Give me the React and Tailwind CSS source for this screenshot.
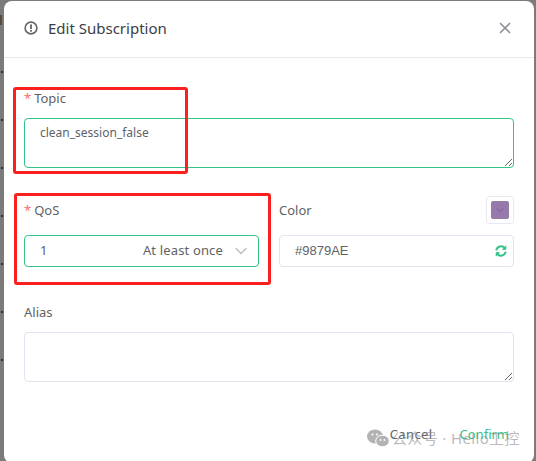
import React from "react";
import { X, ChevronDown } from "lucide-react";

const font = "font-['Noto_Sans','Open_Sans',sans-serif]";
const specks = [71, 119, 167, 215, 263, 311, 359];

function Label({ required, children }) {
  return (
    <div className="h-5 flex items-center text-[13px] leading-5 text-[#606266]">
      {required && <span className="text-[#f56c6c] mr-[3px] text-[13px]">*</span>}
      {children}
    </div>
  );
}

function Area({ active, value }) {
  return (
    <textarea
      readOnly
      value={value}
      className={`block w-full h-[50px] rounded-[4px] border px-[15px] py-[4px] text-[12px] leading-[20px] text-[#606266] outline-none resize-y bg-white ${active ? "border-[#34c388]" : "border-[#e4e2ee]"}`}
    />
  );
}

export default function App() {
  return (
    <div className={`relative w-[536px] h-[461px] overflow-hidden bg-[#7b7b7b] ${font}`}>
      {specks.map((y) => (
        <div key={y} className="absolute left-[1px] w-[2px] h-[2px] bg-[#2f3338]" style={{ top: y }} />
      ))}
      <div className="absolute left-0 top-[15px] w-[2px] h-[10px] bg-[#5a4a3a]" />

      <div className="ml-[4px] mt-[1px] w-[530px] h-[462px] bg-white rounded-[8px] flex flex-col">
        <header className="h-[57px] shrink-0 border-b border-[#e9e7f0] flex items-center pl-[20px] pr-[20px] pb-[2px]">
          <svg width="14" height="14" viewBox="0 0 14 14" fill="none" className="mr-[10px]">
            <circle cx="7" cy="7" r="5.9" stroke="#66666a" strokeWidth="1.6" />
            <rect x="6.1" y="3.4" width="1.8" height="4.6" fill="#66666a" />
            <rect x="6.1" y="9" width="1.8" height="1.7" fill="#66666a" />
          </svg>
          <span className="text-[15px] text-[#3d3d45]">Edit Subscription</span>
          <X className="ml-auto text-[#8f9196]" size={18} strokeWidth={2.2} />
        </header>

        <main className="flex-1 px-[20px] pt-[30px] flex flex-col">
          <Label required>Topic</Label>
          <div className="mt-[10px]">
            <Area active value="clean_session_false" />
          </div>

          <div className="mt-[26px] grid grid-cols-2 gap-x-[20px]">
            <div>
              <div className="h-[32px] flex items-center"><Label required>QoS</Label></div>
              <div className="mt-[9px] h-[32px] rounded-[4px] border border-[#34c388] flex items-center pl-[15px] pr-[7px] text-[13px] text-[#606266]">
                <span>1</span>
                <span className="ml-auto tracking-[0.15px]">At least once</span>
                <ChevronDown className="ml-[8px] text-[#c0c4cc]" size={20} strokeWidth={2} />
              </div>
            </div>
            <div>
              <div className="h-[32px] flex items-center justify-between">
                <Label>Color</Label>
                <div className="w-[28px] h-[28px] rounded-[4px] border border-[#e9e7f0] flex items-center justify-center">
                  <div className="w-[18px] h-[18px] rounded-[2px] bg-[#9879ae] border border-[#8a8a8a]/50 flex items-center justify-center">
                    <ChevronDown className="text-[#6e5680]" size={12} strokeWidth={1.5} />
                  </div>
                </div>
              </div>
              <div className="mt-[9px] h-[32px] rounded-[4px] border border-[#e4e2ee] flex items-center pl-[15px] pr-[6px] text-[13px] text-[#606266]">
                <span className="font-['Liberation_Sans',sans-serif]">#9879AE</span>
                <svg width="12" height="12" viewBox="0 0 12 12" fill="none" className="ml-auto" stroke="#34c388" strokeWidth="2">
                  <path d="M1.3 5.2A4.8 4.8 0 0 1 9.8 3.2" />
                  <path d="M10.7 6.8A4.8 4.8 0 0 1 2.2 8.8" />
                  <path d="M10.8 0.8V4.3H7.4" fill="#34c388" strokeWidth="1" />
                  <path d="M1.2 11.2V7.7H4.6" fill="#34c388" strokeWidth="1" />
                </svg>
              </div>
            </div>
          </div>

          <div className="mt-[35px]"><Label>Alias</Label></div>
          <div className="mt-[10px]">
            <Area value="" />
          </div>

          <footer className="mt-[42px] flex justify-end gap-[26px] text-[13px] leading-5 pr-[5px]">
            <span className="text-[#606266] tracking-[0.4px] -translate-x-[1px]">Cancel</span>
            <span className="text-[#34c388]">Confirm</span>
          </footer>
        </main>
      </div>

      {/* annotation rectangles drawn over the screenshot */}
      <div className="absolute left-[13px] top-[87px] w-[175px] h-[87px] border-[3px] border-[#fb2020] rounded-[3px]" />
      <div className="absolute left-[14px] top-[193px] w-[257px] h-[92px] border-[3px] border-[#fb2020] rounded-[3px]" />

      {/* watermark */}
      <div className="absolute left-[367px] top-[426px] flex items-center text-[15px] leading-6 text-[#8c8c8c]/60 font-['Noto_Sans','Noto_Sans_CJK_SC',sans-serif]">
        <svg width="23" height="19" viewBox="0 0 23 19" className="mr-[2px] shrink-0">
          <ellipse cx="8" cy="7.5" rx="8" ry="7" fill="#b3b3b3" />
          <ellipse cx="15.5" cy="12" rx="6.8" ry="5.8" fill="#b3b3b3" stroke="#fff" strokeWidth="1" />
          <circle cx="5.5" cy="5.5" r="1" fill="#fff" />
          <circle cx="10" cy="5.5" r="1" fill="#fff" />
          <circle cx="13.5" cy="11" r="0.9" fill="#fff" />
          <circle cx="17.5" cy="11" r="0.9" fill="#fff" />
        </svg>
        <span className="whitespace-nowrap tracking-[0.35px]">公众号 · Hello工控</span>
      </div>
    </div>
  );
}
